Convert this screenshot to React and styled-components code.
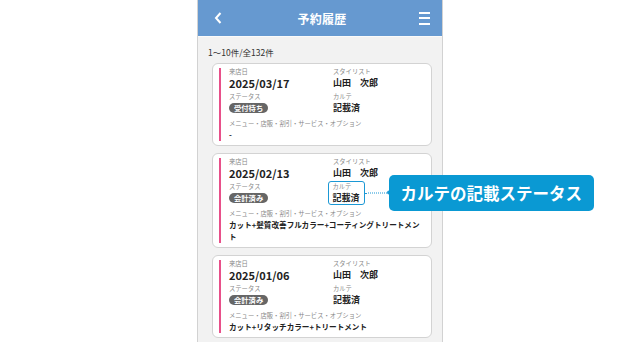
import React from "react";
import styled, { createGlobalStyle } from "styled-components";

const GlobalStyle = createGlobalStyle`
  html, body {
    margin: 0;
    padding: 0;
    background: #fff;
  }
  body {
    font-family: "Noto Sans CJK JP", "Noto Sans", sans-serif;
  }
`;

const Page = styled.div`
  width: 644px;
  height: 342px;
  overflow: hidden;
  display: flex;
  padding-left: 197px;
  box-sizing: border-box;
`;

const Phone = styled.div`
  width: 246px;
  height: 342px;
  box-sizing: border-box;
  border-left: 1px solid #d2d2d2;
  border-right: 1px solid #d2d2d2;
  background: #f2f2f2;
`;

const Header = styled.header`
  height: 36px;
  background: #6699d0;
  border-bottom: 1px solid #fafafa;
  display: grid;
  grid-template-columns: 1fr auto 1fr;
  align-items: center;
  padding: 0 12px 0 16px;
`;

const Title = styled.h1`
  margin: 0;
  color: #fff;
  font-size: 12px;
  font-weight: 700;
  letter-spacing: 0.3px;
`;

const Back = styled.svg`
  justify-self: start;
  display: block;
`;

const Burger = styled.div`
  justify-self: end;
  width: 11px;
  display: flex;
  flex-direction: column;
  gap: 3.5px;
  span {
    display: block;
    height: 2px;
    background: #fff;
  }
`;

const Content = styled.div`
  padding: 8px 10px 0 10px;
`;

const Count = styled.div`
  font-size: 8.5px;
  line-height: 14px;
  color: #333;
`;

const List = styled.div`
  margin-top: 4px;
  padding-left: 4px;
  display: flex;
  flex-direction: column;
  gap: 7px;
`;

const Card = styled.div`
  background: #fff;
  border: 1px solid #d3d3d3;
  border-radius: 6px;
  padding: 4px 10px 4px 6px;
`;

const Accent = styled.div`
  border-left: 2px solid #e8508a;
  padding-left: 8px;
  display: grid;
  grid-template-columns: 104px 1fr;
  row-gap: 4px;
`;

const Field = styled.div`
  grid-column: ${(p) => (p.$wide ? "1 / span 2" : "auto")};
  margin-top: ${(p) => (p.$wide ? "2px" : "0")};
  display: flex;
  flex-direction: column;
  align-items: flex-start;
`;

const Label = styled.div`
  font-size: 6.3px;
  line-height: 8px;
  color: #888;
  margin-bottom: 1px;
  white-space: nowrap;
`;

const Value = styled.div`
  font-size: ${(p) => p.$size || "9px"};
  line-height: 12px;
  min-height: 12px;
  font-weight: 700;
  color: #222;
  display: flex;
  align-items: center;
`;

const MenuValue = styled.div`
  font-size: 7.6px;
  line-height: 12px;
  font-weight: 700;
  color: #222;
  width: 100%;
`;

const Badge = styled.span`
  display: inline-block;
  height: 10.5px;
  line-height: 10.5px;
  padding: 0 5px;
  border-radius: 5.5px;
  background: #666;
  color: #fff;
  font-size: 7.3px;
  font-weight: 700;
`;

const Highlight = styled.div`
  position: relative;
  width: fit-content;
  border: 1.5px solid #1b98d5;
  border-radius: 3px;
  padding: 0.5px 4px;
  margin: -2px 0 -2px -5.5px;
`;

const Connector = styled.div`
  position: absolute;
  left: calc(100% + 1.5px);
  top: 50%;
  width: 24px;
  border-top: 1.5px dotted #1b98d5;
  transform: translateY(-50%);
  &::after {
    content: "";
    position: absolute;
    right: -2px;
    top: -2.75px;
    width: 4px;
    height: 4px;
    border-radius: 50%;
    background: #1b98d5;
  }
`;

const Callout = styled.div`
  position: absolute;
  z-index: 2;
  left: calc(100% + 25px);
  top: 50%;
  transform: translateY(-50%);
  white-space: nowrap;
  background: #0a99d3;
  color: #fff;
  font-size: 16.5px;
  font-weight: 700;
  line-height: 24px;
  padding: 6px 12px;
  border-radius: 5px;
`;

const reservations = [
  { date: "2025/03/17", status: "受付待ち", menu: "-" },
  {
    date: "2025/02/13",
    status: "会計済み",
    menu: "カット+髪質改善フルカラー+コーティングトリートメント",
    note: true,
  },
  { date: "2025/01/06", status: "会計済み", menu: "カット+リタッチカラー+トリートメント" },
];

const Karte = ({ note }) => {
  const inner = (
    <>
      <Label>カルテ</Label>
      <Value>記載済</Value>
    </>
  );
  if (!note) return <Field>{inner}</Field>;
  return (
    <Field>
      <Highlight>
        {inner}
        <Connector />
        <Callout>カルテの記載ステータス</Callout>
      </Highlight>
    </Field>
  );
};

const ReservationCard = ({ item }) => (
  <Card>
    <Accent>
      <Field>
        <Label>来店日</Label>
        <Value $size="11px">{item.date}</Value>
      </Field>
      <Field>
        <Label>スタイリスト</Label>
        <Value>山田　次郎</Value>
      </Field>
      <Field>
        <Label>ステータス</Label>
        <Value>
          <Badge>{item.status}</Badge>
        </Value>
      </Field>
      <Karte note={item.note} />
      <Field $wide>
        <Label>メニュー・店販・割引・サービス・オプション</Label>
        <MenuValue>{item.menu}</MenuValue>
      </Field>
    </Accent>
  </Card>
);

export default function App() {
  return (
    <>
      <GlobalStyle />
      <Page>
        <Phone>
          <Header>
            <Back width="8" height="12" viewBox="0 0 8 12">
              <path d="M6.5 1 L2 6 L6.5 11" fill="none" stroke="#fff" strokeWidth="2" />
            </Back>
            <Title>予約履歴</Title>
            <Burger>
              <span />
              <span />
              <span />
            </Burger>
          </Header>
          <Content>
            <Count>1〜10件/全132件</Count>
            <List>
              {reservations.map((r) => (
                <ReservationCard key={r.date} item={r} />
              ))}
            </List>
          </Content>
        </Phone>
      </Page>
    </>
  );
}
